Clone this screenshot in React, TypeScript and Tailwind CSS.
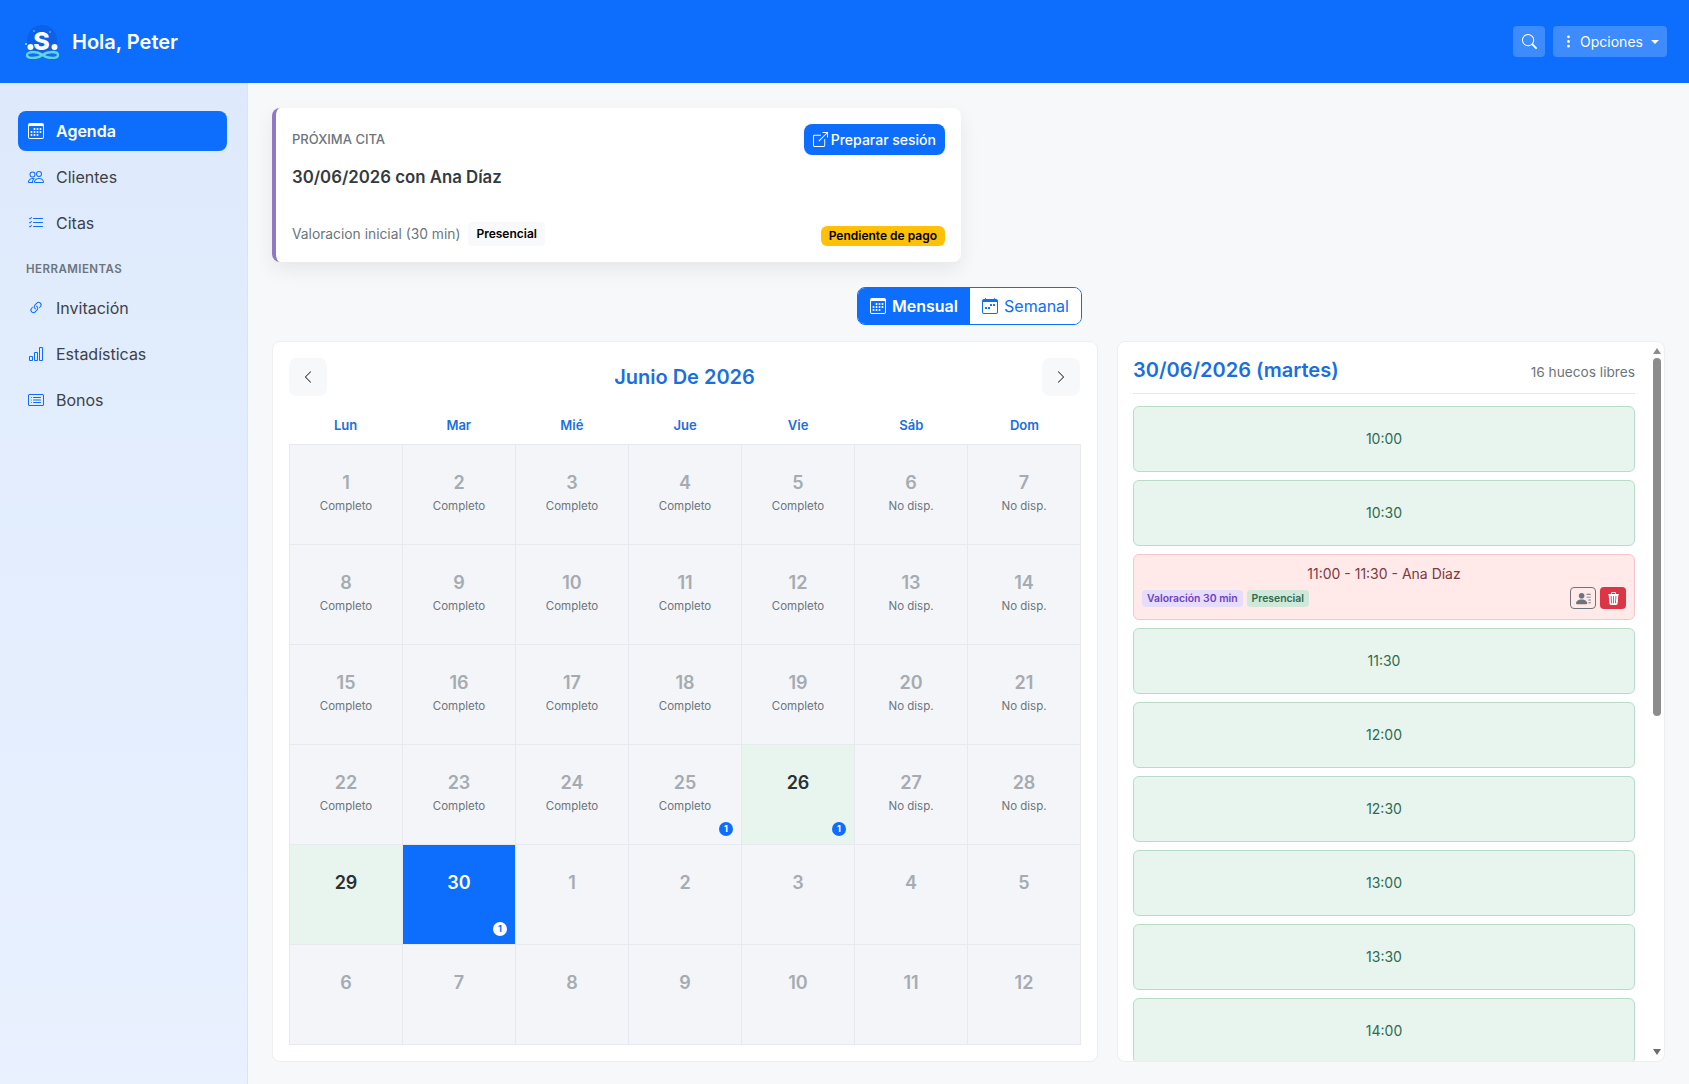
import React from 'react';
import {
  BsBarChart,
  BsBoxArrowUpRight,
  BsCalendar3,
  BsCalendarWeek,
  BsCardList,
  BsChevronLeft,
  BsChevronRight,
  BsLink45Deg,
  BsListCheck,
  BsPeople,
  BsPersonLinesFill,
  BsSearch,
  BsThreeDotsVertical,
  BsTrash3Fill,
} from 'react-icons/bs';

const Logo = () => (
  <svg width="40" height="34" viewBox="0 0 40 34" className="shrink-0">
    <circle cx="19" cy="15" r="15" fill="#0a58d8" opacity="0.6" />
    <text x="18.500" y="25" textAnchor="middle" fill="#fff" fontSize="25" fontWeight="800" fontFamily="Inter, sans-serif">S</text>
    <circle cx="7.500" cy="22" r="3" fill="#fff" />
    <circle cx="31.500" cy="22" r="3" fill="#fff" />
    <circle cx="3" cy="19" r="0.900" fill="#cfe4ff" />
    <circle cx="11" cy="6" r="0.700" fill="#cfe4ff" />
    <circle cx="27" cy="7" r="0.700" fill="#cfe4ff" />
    <path d="M19.500 30C16 27.500 13 27 10 27 6 27 4 28.500 4 30 4 32 6 33 10 33 13 33 16 32.500 19.500 30 23 27.500 26 27 29 27 33 27 35 28.500 35 30 35 32 33 33 29 33 26 33 23 32.500 19.500 30Z" fill="none" stroke="#63d3dc" strokeWidth="2.400" />
  </svg>
);

const navTop = [
  { label: 'Agenda', icon: BsCalendar3, active: true },
  { label: 'Clientes', icon: BsPeople },
  { label: 'Citas', icon: BsListCheck },
];
const navTools = [
  { label: 'Invitación', icon: BsLink45Deg },
  { label: 'Estadísticas', icon: BsBarChart },
  { label: 'Bonos', icon: BsCardList },
];

const NavItem = ({ label, icon: Icon, active }: { label: string; icon: React.ElementType; active?: boolean }) => (
  <a
    className={`flex h-10 items-center gap-[12px] rounded-lg px-[10px] text-base ${
      active ? 'bg-[#0d6efd] font-semibold text-white' : 'text-[#3d4248]'
    }`}
  >
    <span className={`flex w-4 justify-center ${active ? 'text-white' : 'text-[#0d6efd]'}`}>
      <Icon size={16} />
    </span>
    {label}
  </a>
);

const weekdays = ['Lun', 'Mar', 'Mié', 'Jue', 'Vie', 'Sáb', 'Dom'];

type Day = { n: number; label?: string; state?: 'free' | 'today'; badge?: boolean };

const june: Day[] = Array.from({ length: 28 }, (_, i) => {
  const n = i + 1;
  const weekend = i % 7 >= 5;
  const d: Day = { n, label: weekend ? 'No disp.' : 'Completo' };
  if (n === 25) d.badge = true;
  if (n === 26) return { n, state: 'free', badge: true };
  return d;
});

const days: Day[] = [
  ...june,
  { n: 29, state: 'free' },
  { n: 30, state: 'today', badge: true },
  ...[1, 2, 3, 4, 5, 6, 7, 8, 9, 10, 11, 12].map((n) => ({ n })),
];

const DayCell = ({ day }: { day: Day }) => {
  const bg = day.state === 'today' ? 'bg-[#0d6efd]' : day.state === 'free' ? 'bg-[#e8f5ee]' : 'bg-[#f3f5f8]';
  const num =
    day.state === 'today' ? 'text-white' : day.state === 'free' ? 'text-[#2b3035]' : 'text-[#a6abb1]';
  return (
    <div className={`relative flex h-[100px] flex-col items-center border-r border-b border-[#e6e9ed] pt-[25px] ${bg}`}>
      <span className={`text-lg leading-[26px] font-semibold ${num}`}>{day.n}</span>
      {day.label && <span className="mt-[1px] text-[11.5px] leading-[18px] text-[#6c757d]">{day.label}</span>}
      {day.badge && (
        <span
          className={`absolute right-[8px] bottom-[8px] flex h-[14px] w-[14px] items-center justify-center rounded-full text-[9px] font-bold ${
            day.state === 'today' ? 'bg-white text-[#0d6efd]' : 'bg-[#0d6efd] text-white'
          }`}
        >
          1
        </span>
      )}
    </div>
  );
};

// only the rows that fit above the fold of the panel
const slots = ['10:00', '10:30', 'booked', '11:30', '12:00', '12:30', '13:00', '13:30', '14:00'];

const Scrollbar = () => (
  <div className="absolute top-0 right-0 bottom-0 flex w-[15px] flex-col items-center pt-[6px] pb-[6px]">
    <span className="h-0 w-0 border-x-[4px] border-b-[6px] border-x-transparent border-b-[#8c8c8c]" />
    <span className="mt-[4px] h-[358px] w-[8px] rounded-full bg-[#8c8c8c]" />
    <span className="mt-auto h-0 w-0 border-x-[4px] border-t-[6px] border-x-transparent border-t-[#6e6e6e]" />
  </div>
);

export default function App() {
  return (
    <div className="flex h-[1084px] flex-col overflow-hidden bg-[#f6f8f9] [font-family:Inter,sans-serif] text-[#2b3035]">
      <header className="flex h-[83px] shrink-0 items-center justify-between bg-[#0d6efd] pr-[22px] pl-[23px]">
        <div className="flex items-center gap-[9px]">
          <Logo />
          <span className="text-xl font-semibold text-white">Hola, Peter</span>
        </div>
        <div className="flex items-center gap-2">
          <button className="flex h-[31px] w-8 items-center justify-center rounded bg-[#3d8bfd] text-white">
            <BsSearch size={15} />
          </button>
          <button className="flex h-[31px] w-[114px] items-center justify-center gap-[4px] rounded bg-[#3d8bfd] text-sm text-white">
            <BsThreeDotsVertical size={15} />
            Opciones
            <span className="ml-[4px] h-0 w-0 border-x-[4px] border-t-[4px] border-x-transparent border-t-white" />
          </button>
        </div>
      </header>

      <div className="flex min-h-0 flex-1">
        <aside className="w-[248px] shrink-0 border-r border-[#dbe4f0] bg-gradient-to-b from-[#deeafc] to-[#e9f1ff] pt-[28px] pr-[20px] pl-[18px]">
          <nav className="flex flex-col gap-[6px]">
            {navTop.map((item) => (
              <NavItem key={item.label} {...item} />
            ))}
          </nav>
          <div className="mt-[18px] mb-[11px] pl-[8px] text-[11.5px] leading-[16px] font-semibold tracking-[0.04em] text-[#6c757d]">
            HERRAMIENTAS
          </div>
          <nav className="flex flex-col gap-[6px]">
            {navTools.map((item) => (
              <NavItem key={item.label} {...item} />
            ))}
          </nav>
        </aside>

        <main className="min-w-0 flex-1 px-[24px] pt-[25px]">
          <section className="flex h-[154px] w-[689px] flex-col rounded-lg border-l-4 border-[#9079c4] bg-white py-[16px] pr-[16px] pl-[16px] shadow-[0_8px_20px_rgba(0,0,0,0.07)]">
            <div className="flex items-start justify-between">
              <span className="mt-[7px] text-[13px] leading-[16px] font-medium text-[#6c757d]">PRÓXIMA CITA</span>
              <button className="flex h-[31px] items-center gap-[3px] rounded-lg bg-[#0d6efd] px-[9px] text-sm font-medium text-white">
                <BsBoxArrowUpRight size={15} />
                Preparar sesión
              </button>
            </div>
            <div className="mt-[10px] text-[16.8px] leading-[24px] font-semibold text-[#343a40]">30/06/2026 con Ana Díaz</div>
            <div className="mt-auto flex items-end justify-between">
              <div className="flex items-center gap-[8px] text-[13.8px] text-[#6c757d]">
                <span>Valoracion inicial (30 min)</span>
                <span className="rounded bg-[#f8f9fa] px-[8px] py-[4px] text-xs font-semibold text-black">Presencial</span>
              </div>
              <span className="rounded-md bg-[#ffc107] px-[8px] py-[2px] text-xs leading-[16px] font-semibold text-black">
                Pendiente de pago
              </span>
            </div>
          </section>

          <div className="mt-[25px] mb-[16px] flex w-[810px] justify-end">
            <div className="flex h-[38px] overflow-hidden rounded-lg border border-[#0d6efd] text-base">
              <div className="flex w-[112px] items-center justify-center gap-[6px] bg-[#0d6efd] font-semibold text-white">
                <BsCalendar3 size={16} />
                Mensual
              </div>
              <div className="flex w-[111px] items-center justify-center gap-[6px] bg-white text-[#0d6efd]">
                <BsCalendarWeek size={16} />
                Semanal
              </div>
            </div>
          </div>

          <div className="grid h-[718px] grid-cols-[826px_1fr] gap-[19px]">
            <section className="rounded-lg border border-[#eceef1] bg-white p-[16px]">
              <div className="flex h-[38px] items-center justify-between">
                <button className="flex h-[38px] w-[38px] items-center justify-center rounded-lg bg-[#f7f8fa] text-[#212529]">
                  <BsChevronLeft size={14} />
                </button>
                <h2 className="text-xl font-semibold text-[#1a6fe0]">Junio De 2026</h2>
                <button className="mr-[1px] flex h-[38px] w-[38px] items-center justify-center rounded-lg bg-[#f7f8fa] text-[#212529]">
                  <BsChevronRight size={14} />
                </button>
              </div>
              <div className="grid h-[48px] grid-cols-7 items-center pt-[12px] text-center text-[13px] font-semibold text-[#1a6fe0]">
                {weekdays.map((w) => (
                  <span key={w}>{w}</span>
                ))}
              </div>
              <div className="grid grid-cols-7 border-t border-l border-[#e6e9ed]">
                {days.map((d, i) => (
                  <DayCell key={i} day={d} />
                ))}
              </div>
            </section>

            <section className="relative overflow-hidden rounded-lg border border-[#eceef1] bg-white pt-[11px] pr-[29px] pl-[15px]">
              <div className="flex h-[41px] items-center justify-between border-b border-[#e3e6ea] pb-[6px]">
                <h3 className="text-xl font-semibold text-[#1a6fe0]">30/06/2026 (martes)</h3>
                <span className="mt-[4px] text-[13.7px] text-[#6c757d]">16 huecos libres</span>
              </div>
              <div className="mt-[12px] flex flex-col gap-[8px]">
                {slots.map((s) =>
                  s === 'booked' ? (
                    <div key={s} className="flex h-[66px] shrink-0 flex-col rounded-md border border-[#f5c6cb] bg-[#ffe9e9] px-[8px]">
                      <div className="mt-[9px] text-center text-sm leading-[20px] text-[#7d3a42]">11:00 - 11:30 - Ana Díaz</div>
                      <div className="mt-[3px] flex items-center justify-between">
                        <div className="flex gap-[4px]">
                          <span className="rounded bg-[#e6dcfb] px-[5px] py-[1px] text-[10.4px] leading-[15px] font-semibold text-[#6f42c1]">Valoración 30 min</span>
                          <span className="rounded bg-[#cfe8da] px-[5px] py-[1px] text-[10.4px] leading-[15px] font-semibold text-[#2f6b50]">Presencial</span>
                        </div>
                        <div className="flex gap-[4px]">
                          <button className="flex h-[22px] w-[26px] items-center justify-center rounded border border-[#6c757d] text-[#6c757d]">
                            <BsPersonLinesFill size={15} />
                          </button>
                          <button className="flex h-[22px] w-[26px] items-center justify-center rounded bg-[#dc3545] text-white">
                            <BsTrash3Fill size={13} />
                          </button>
                        </div>
                      </div>
                    </div>
                  ) : (
                    <div key={s} className="flex h-[66px] shrink-0 items-center justify-center rounded-md border border-[#b9dcc9] bg-[#e8f5ee] text-sm text-[#2f6b50]">
                      {s}
                    </div>
                  ),
                )}
              </div>
              <Scrollbar />
            </section>
          </div>
        </main>
      </div>
    </div>
  );
}
